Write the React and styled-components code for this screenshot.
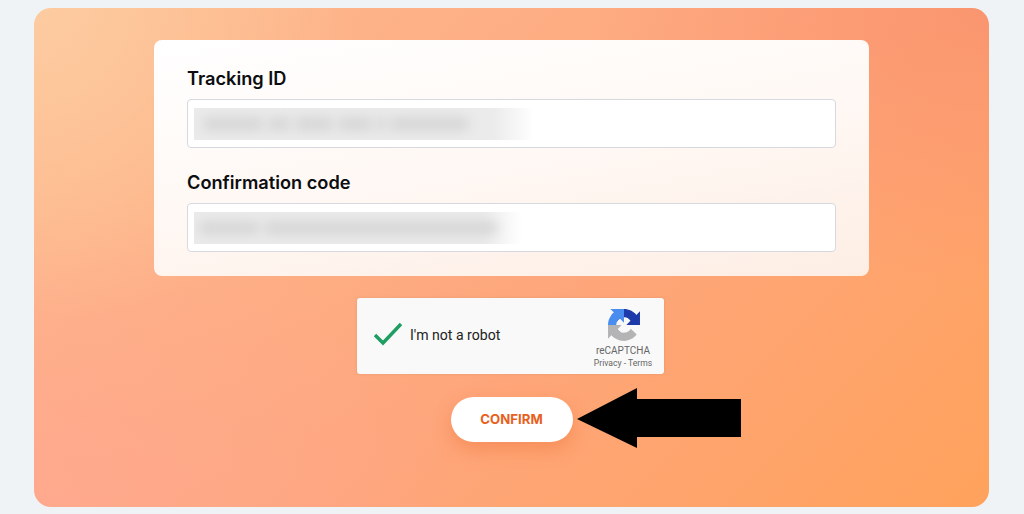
import styled, { createGlobalStyle } from "styled-components";

const GlobalStyle = createGlobalStyle`
  html, body {
    margin: 0;
    padding: 0;
    background: #eff3f6;
    font-family: "Inter", "Liberation Sans", sans-serif;
  }
  * { box-sizing: border-box; }
`;

const Page = styled.div`
  width: 1024px;
  height: 514px;
  padding: 8px 35px 7px 34px;
  overflow: hidden;
`;

const Hero = styled.section`
  height: 499px;
  border-radius: 17px;
  padding-top: 32px;
  display: flex;
  flex-direction: column;
  align-items: center;
  background:
    radial-gradient(circle at 0% 0%, rgba(253, 205, 162, 0.9) 0, rgba(253, 205, 162, 0) 320px),
    radial-gradient(ellipse 420px 300px at 0% 100%, rgba(255, 166, 145, 0.75) 0, rgba(255, 166, 145, 0) 100%),
    radial-gradient(ellipse 400px 280px at 100% 0%, rgba(249, 146, 110, 0.8) 0, rgba(249, 146, 110, 0) 100%),
    linear-gradient(135deg, #fdbb90 0%, #fea67c 55%, #ffa25c 100%);
`;

const Card = styled.div`
  width: 715px;
  height: 236px;
  padding: 27px 33px 0;
  border-radius: 8px;
  background: linear-gradient(170deg, #ffffff 0%, #fff8f4 50%, #fdeee4 100%);
`;

const Field = styled.div`
  margin-bottom: 23px;
`;

const Label = styled.label`
  display: block;
  height: 22px;
  margin-bottom: 10px;
  font-size: 18.2px;
  line-height: 22px;
  font-weight: 600;
  color: #0c0d10;
`;

const InputBox = styled.div`
  height: 49px;
  padding: 8px 6px;
  background: #fff;
  border: 1px solid #d6d9df;
  border-radius: 4px;
`;

const BlurredValue = styled.div`
  width: ${(p) => p.$width}px;
  height: 32px;
  padding-left: ${(p) => p.$inset}px;
  display: flex;
  align-items: center;
  gap: 3px;
  overflow: hidden;
  background: linear-gradient(90deg, #ebebeb 0%, #ebebeb 88%, #ffffff 100%);
`;

const Smudge = styled.span`
  flex: none;
  width: ${(p) => p.$w}px;
  height: 14px;
  border-radius: 7px;
  background: #d6d6d6;
  filter: blur(6px);
`;

const Captcha = styled.div`
  width: 307px;
  height: 76px;
  margin-top: 22px;
  margin-right: 2px;
  padding: 0 12px 0 16px;
  display: flex;
  align-items: center;
  background: #f9f9f9;
  border-radius: 3px;
  box-shadow: 0 0 3px rgba(0, 0, 0, 0.1);
  font-family: "Roboto", "Liberation Sans", sans-serif;
`;

const CheckMark = styled.svg`
  flex: none;
  width: 30px;
  height: 24px;
  margin-top: -4px;
`;

const CaptchaText = styled.span`
  margin-left: 7px;
  margin-top: -3px;
  flex: 1;
  font-size: 14.1px;
  color: #222;
`;

const Brand = styled.div`
  width: 58px;
  padding-top: 5px;
  display: flex;
  flex-direction: column;
  align-items: center;
  color: #666;
  white-space: nowrap;
`;

const BrandLogo = styled.svg`
  width: 32px;
  height: 32px;
  margin-bottom: 3px;
  margin-left: 1px;
`;

const BrandName = styled.div`
  font-size: 10px;
  line-height: 13px;
`;

const BrandLinks = styled.div`
  font-size: 8.6px;
  line-height: 12px;
`;

const Action = styled.div`
  position: relative;
  margin-top: 23px;
`;

const ConfirmButton = styled.button`
  display: block;
  width: 122px;
  height: 45px;
  padding: 0 0 2px;
  border: 0;
  border-radius: 23px;
  background: #fff;
  color: #e8601c;
  font-family: inherit;
  font-size: 13.2px;
  font-weight: 700;
  box-shadow: 0 8px 18px rgba(235, 110, 50, 0.4);
`;

const Arrow = styled.svg`
  position: absolute;
  left: 126px;
  top: -9px;
  width: 165px;
  height: 61px;
`;

export default function App() {
  return (
    <Page>
      <GlobalStyle />
      <Hero>
        <Card>
          <Field>
            <Label>Tracking ID</Label>
            <InputBox>
              <BlurredValue $width={340} $inset={8}>
                <Smudge $w={62} />
                <Smudge $w={24} />
                <Smudge $w={40} />
                <Smudge $w={36} />
                <Smudge $w={10} />
                <Smudge $w={80} />
              </BlurredValue>
            </InputBox>
          </Field>
          <Field>
            <Label>Confirmation code</Label>
            <InputBox>
              <BlurredValue $width={328} $inset={4}>
                <Smudge $w={62} />
                <Smudge $w={235} />
              </BlurredValue>
            </InputBox>
          </Field>
        </Card>
        <Captcha>
          <CheckMark viewBox="0 0 30 24">
            <path d="M2 13 L10 21 L28 2" fill="none" stroke="#1e9e63" strokeWidth="3.4" />
          </CheckMark>
          <CaptchaText>I'm not a robot</CaptchaText>
          <Brand>
            <BrandLogo viewBox="0 0 64 64">
              <path fill="#1c3aa9" d="M64 31.955l-.033-1.37V4.687l-7.16 7.16C50.948 4.674 42.033.093 32.05.093c-10.4 0-19.622 4.96-25.458 12.64l11.736 11.86a15.55 15.55 0 0 1 4.754-5.334c2.05-1.6 4.952-2.906 8.968-2.906.485 0 .86.057 1.135.163 4.976.393 9.288 3.14 11.828 7.124l-8.307 8.307 26.304.006" />
              <path fill="#4a8df0" d="M31.988 0l-1.37.033H4.72l7.16 7.16C4.7 13.052.12 21.967.12 31.95c0 10.4 4.96 19.622 12.64 25.458l11.86-11.736a15.55 15.55 0 0 1-5.334-4.754c-1.6-2.05-2.906-4.952-2.906-8.968 0-.485.057-.86.163-1.135.393-4.976 3.14-9.288 7.124-11.828l8.307 8.307L32 0" />
              <path fill="#b4b4b4" d="M.012 32l.033 1.37v25.898l7.16-7.16C13.063 59.28 21.98 63.86 31.96 63.86c10.4 0 19.622-4.96 25.458-12.64L45.68 39.36a15.55 15.55 0 0 1-4.754 5.334c-2.05 1.6-4.952 2.906-8.968 2.906-.485 0-.86-.057-1.135-.163-4.976-.393-9.288-3.14-11.828-7.124l8.307-8.307L.012 32" />
            </BrandLogo>
            <BrandName>reCAPTCHA</BrandName>
            <BrandLinks>Privacy - Terms</BrandLinks>
          </Brand>
        </Captcha>
        <Action>
          <ConfirmButton>CONFIRM</ConfirmButton>
          <Arrow viewBox="0 0 165 61">
            <path d="M0 31 L60 0 L60 11 L164 11 L164 49 L60 49 L60 60 Z" fill="#000" />
          </Arrow>
        </Action>
      </Hero>
    </Page>
  );
}
